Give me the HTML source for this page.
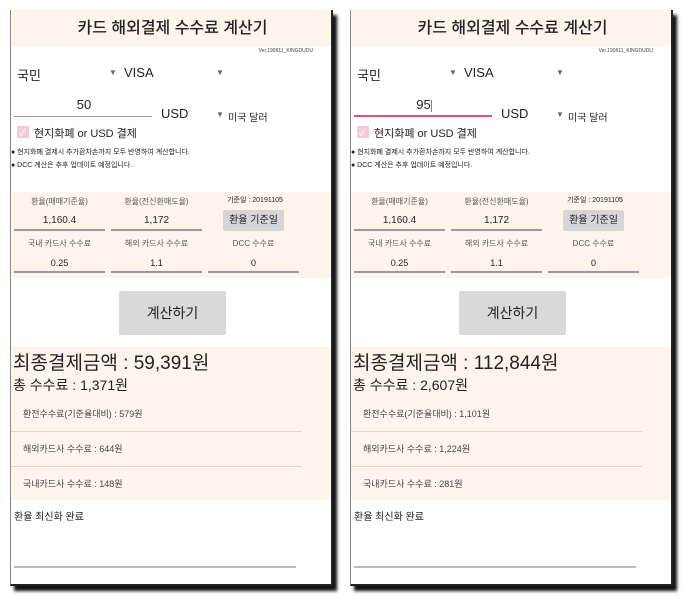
<!DOCTYPE html>
<html><head><meta charset="utf-8"><style>
*{margin:0;padding:0;box-sizing:border-box}
body{width:688px;height:600px;background:#fff;position:relative;overflow:hidden;font-family:"Liberation Sans","Noto Sans CJK KR",sans-serif;color:#222}
.p{position:absolute;top:10px;width:323px;height:576px;background:#fff;box-shadow:4px 5px 3px #111;border-right:2px solid #222;border-bottom:2px solid #222;border-left:1px solid #888;overflow:hidden}
.p div{position:absolute;white-space:nowrap}
.bg{background:#fdf5ec}
.t{left:0;width:323px;text-align:center}
.ul{height:2px;background:#999}
.c{text-align:center}
.arr{font-size:8px;color:#666}
</style></head><body>

<div class="p" style="left:10px">
<div class="bg" style="left:0;top:0;width:323px;height:36px"></div>
<div class="t" style="top:4px;font-size:16px;font-weight:500;color:#222">카드 해외결제 수수료 계산기</div>
<div style="right:18px;top:38px;font-size:5px;color:#444">Ver.190611_KINGDUDU</div>
<div style="left:6px;top:55px;font-size:13px">국민</div>
<div class="arr" style="left:98px;top:58px">▼</div>
<div style="left:113px;top:55px;font-size:13px">VISA</div>
<div class="arr" style="left:205px;top:58px">▼</div>
<div class="c" style="left:3px;width:140px;top:87px;font-size:13px">50</div>
<div class="ul" style="left:3px;top:106px;width:138px;height:1px"></div>
<div style="left:150px;top:96px;font-size:13px">USD</div>
<div class="arr" style="left:205px;top:100px">▼</div>
<div style="left:217px;top:99px;font-size:10px">미국 달러</div>
<div style="left:6px;top:116px;width:12px;height:12px;background:#f6c9d6;border-radius:1px"></div>
<div style="left:8px;top:114px;font-size:10px;color:#fff">✓</div>
<div style="left:23px;top:115px;font-size:11px">현지화폐 or USD 결제</div>
<div style="left:0;top:137px;font-size:7px">● 현지화폐 결제시 추가환차손까지 모두 반영하여 계산합니다.</div>
<div style="left:0;top:150px;font-size:7px">● DCC 계산은 추후 업데이트 예정입니다.</div>
<div class="bg" style="left:0;top:182px;width:323px;height:86px"></div>
<div class="c" style="left:3px;width:91px;top:186px;font-size:8px;color:#555">환율(매매기준율)</div>
<div class="c" style="left:100px;width:91px;top:186px;font-size:8px;color:#555">환율(전신환매도율)</div>
<div class="c" style="left:212px;width:64px;top:185px;font-size:7px">기준일 : 20191105</div>
<div class="c" style="left:3px;width:91px;top:205px;font-size:10px">1,160.4</div>
<div class="c" style="left:100px;width:91px;top:205px;font-size:10px">1,172</div>
<div class="c" style="left:212px;width:61px;top:200px;height:21px;line-height:21px;background:#d6d6d6;font-size:10px;border-radius:2px">환율 기준일</div>
<div class="ul" style="left:3px;top:219px;width:91px"></div>
<div class="ul" style="left:100px;top:219px;width:91px"></div>
<div class="c" style="left:3px;width:91px;top:228px;font-size:8px;color:#555">국내 카드사 수수료</div>
<div class="c" style="left:100px;width:91px;top:228px;font-size:8px;color:#555">해외 카드사 수수료</div>
<div class="c" style="left:197px;width:91px;top:228px;font-size:8px;color:#555">DCC 수수료</div>
<div class="c" style="left:3px;width:91px;top:248px;font-size:9px">0.25</div>
<div class="c" style="left:100px;width:91px;top:248px;font-size:9px">1.1</div>
<div class="c" style="left:197px;width:91px;top:248px;font-size:9px">0</div>
<div class="ul" style="left:3px;top:261px;width:91px"></div>
<div class="ul" style="left:100px;top:261px;width:91px"></div>
<div class="ul" style="left:197px;top:261px;width:91px"></div>
<div class="c" style="left:108px;width:107px;top:281px;height:44px;line-height:44px;background:#d9d9d9;font-size:14px;border-radius:2px">계산하기</div>
<div class="bg" style="left:0;top:337px;width:323px;height:153px"></div>
<div style="left:2px;top:338px;font-size:19px">최종결제금액 : 59,391원</div>
<div style="left:2px;top:365px;font-size:14px">총 수수료 : 1,371원</div>
<div style="left:12px;top:397px;font-size:9px;color:#444">환전수수료(기준율대비) : 579원</div>
<div style="left:0;top:421px;width:291px;height:1px;background:#e2d8cc"></div>
<div style="left:12px;top:432px;font-size:9px;color:#444">해외카드사 수수료 : 644원</div>
<div style="left:0;top:456px;width:291px;height:1px;background:#e2d8cc"></div>
<div style="left:12px;top:467px;font-size:9px;color:#444">국내카드사 수수료 : 148원</div>
<div style="left:3px;top:498px;font-size:10px">환율 최신화 완료</div>
<div class="ul" style="left:3px;top:556px;width:282px;background:#bbb"></div>
</div>

<div class="p" style="left:350px">
<div class="bg" style="left:0;top:0;width:323px;height:36px"></div>
<div class="t" style="top:4px;font-size:16px;font-weight:500;color:#222">카드 해외결제 수수료 계산기</div>
<div style="right:18px;top:38px;font-size:5px;color:#444">Ver.190611_KINGDUDU</div>
<div style="left:6px;top:55px;font-size:13px">국민</div>
<div class="arr" style="left:98px;top:58px">▼</div>
<div style="left:113px;top:55px;font-size:13px">VISA</div>
<div class="arr" style="left:205px;top:58px">▼</div>
<div class="c" style="left:3px;width:140px;top:87px;font-size:13px">95<span style="display:inline-block;width:1px;height:12px;background:#e0507a;vertical-align:middle"></span></div>
<div style="left:3px;top:105px;width:138px;height:2px;background:#e0507a"></div>
<div style="left:150px;top:96px;font-size:13px">USD</div>
<div class="arr" style="left:205px;top:100px">▼</div>
<div style="left:217px;top:99px;font-size:10px">미국 달러</div>
<div style="left:6px;top:116px;width:12px;height:12px;background:#f6c9d6;border-radius:1px"></div>
<div style="left:8px;top:114px;font-size:10px;color:#fff">✓</div>
<div style="left:23px;top:115px;font-size:11px">현지화폐 or USD 결제</div>
<div style="left:0;top:137px;font-size:7px">● 현지화폐 결제시 추가환차손까지 모두 반영하여 계산합니다.</div>
<div style="left:0;top:150px;font-size:7px">● DCC 계산은 추후 업데이트 예정입니다.</div>
<div class="bg" style="left:0;top:182px;width:323px;height:86px"></div>
<div class="c" style="left:3px;width:91px;top:186px;font-size:8px;color:#555">환율(매매기준율)</div>
<div class="c" style="left:100px;width:91px;top:186px;font-size:8px;color:#555">환율(전신환매도율)</div>
<div class="c" style="left:212px;width:64px;top:185px;font-size:7px">기준일 : 20191105</div>
<div class="c" style="left:3px;width:91px;top:205px;font-size:10px">1,160.4</div>
<div class="c" style="left:100px;width:91px;top:205px;font-size:10px">1,172</div>
<div class="c" style="left:212px;width:61px;top:200px;height:21px;line-height:21px;background:#d6d6d6;font-size:10px;border-radius:2px">환율 기준일</div>
<div class="ul" style="left:3px;top:219px;width:91px"></div>
<div class="ul" style="left:100px;top:219px;width:91px"></div>
<div class="c" style="left:3px;width:91px;top:228px;font-size:8px;color:#555">국내 카드사 수수료</div>
<div class="c" style="left:100px;width:91px;top:228px;font-size:8px;color:#555">해외 카드사 수수료</div>
<div class="c" style="left:197px;width:91px;top:228px;font-size:8px;color:#555">DCC 수수료</div>
<div class="c" style="left:3px;width:91px;top:248px;font-size:9px">0.25</div>
<div class="c" style="left:100px;width:91px;top:248px;font-size:9px">1.1</div>
<div class="c" style="left:197px;width:91px;top:248px;font-size:9px">0</div>
<div class="ul" style="left:3px;top:261px;width:91px"></div>
<div class="ul" style="left:100px;top:261px;width:91px"></div>
<div class="ul" style="left:197px;top:261px;width:91px"></div>
<div class="c" style="left:108px;width:107px;top:281px;height:44px;line-height:44px;background:#d9d9d9;font-size:14px;border-radius:2px">계산하기</div>
<div class="bg" style="left:0;top:337px;width:323px;height:153px"></div>
<div style="left:2px;top:338px;font-size:19px">최종결제금액 : 112,844원</div>
<div style="left:2px;top:365px;font-size:14px">총 수수료 : 2,607원</div>
<div style="left:12px;top:397px;font-size:9px;color:#444">환전수수료(기준율대비) : 1,101원</div>
<div style="left:0;top:421px;width:291px;height:1px;background:#e2d8cc"></div>
<div style="left:12px;top:432px;font-size:9px;color:#444">해외카드사 수수료 : 1,224원</div>
<div style="left:0;top:456px;width:291px;height:1px;background:#e2d8cc"></div>
<div style="left:12px;top:467px;font-size:9px;color:#444">국내카드사 수수료 : 281원</div>
<div style="left:3px;top:498px;font-size:10px">환율 최신화 완료</div>
<div class="ul" style="left:3px;top:556px;width:282px;background:#bbb"></div>
</div>

</body></html>
